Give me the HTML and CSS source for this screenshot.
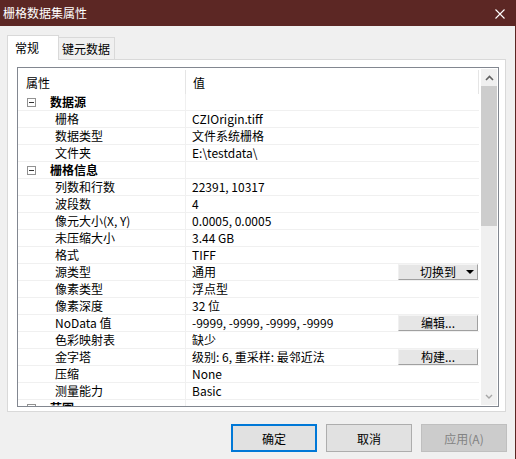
FILE: index.html
```html
<!DOCTYPE html>
<html lang="zh-CN">
<head>
<meta charset="utf-8">
<title>栅格数据集属性</title>
<link rel="stylesheet" href="styles.css">
</head>
<body>
<div class="window">
  <div class="titlebar">
    <span class="title">栅格数据集属性</span>
    <svg class="close" width="10" height="10" viewBox="0 0 10 10"><path d="M0.5 0.5L9.5 9.5M9.5 0.5L0.5 9.5" stroke="#fff" stroke-width="1.1" fill="none"/></svg>
  </div>
  <div class="content">
    <div class="tabs">
      <div class="tab active">常规</div>
      <div class="tab">键元数据</div>
    </div>
    <div class="panel">
      <div class="grid">
        <div class="table">
          <div class="hdr">
            <div class="c1">属性</div>
            <div class="c2">值</div>
          </div>
          <div class="row group"><div class="c1"><span class="toggle"></span><b>数据源</b></div><div class="c2"></div></div>
          <div class="row"><div class="c1">栅格</div><div class="c2">CZIOrigin.tiff</div></div>
          <div class="row"><div class="c1">数据类型</div><div class="c2">文件系统栅格</div></div>
          <div class="row"><div class="c1">文件夹</div><div class="c2">E:\testdata\</div></div>
          <div class="row group"><div class="c1"><span class="toggle"></span><b>栅格信息</b></div><div class="c2"></div></div>
          <div class="row"><div class="c1">列数和行数</div><div class="c2">22391, 10317</div></div>
          <div class="row"><div class="c1">波段数</div><div class="c2">4</div></div>
          <div class="row"><div class="c1">像元大小(X, Y)</div><div class="c2">0.0005, 0.0005</div></div>
          <div class="row"><div class="c1">未压缩大小</div><div class="c2">3.44 GB</div></div>
          <div class="row"><div class="c1">格式</div><div class="c2">TIFF</div></div>
          <div class="row"><div class="c1">源类型</div><div class="c2"><span>通用</span><span class="cellbtn drop"><span>切换到</span><i class="tri"></i></span></div></div>
          <div class="row"><div class="c1">像素类型</div><div class="c2">浮点型</div></div>
          <div class="row"><div class="c1">像素深度</div><div class="c2">32 位</div></div>
          <div class="row"><div class="c1">NoData 值</div><div class="c2"><span>-9999, -9999, -9999, -9999</span><span class="cellbtn">编辑...</span></div></div>
          <div class="row"><div class="c1">色彩映射表</div><div class="c2">缺少</div></div>
          <div class="row"><div class="c1">金字塔</div><div class="c2"><span>级别: 6, 重采样: 最邻近法</span><span class="cellbtn">构建...</span></div></div>
          <div class="row"><div class="c1">压缩</div><div class="c2">None</div></div>
          <div class="row"><div class="c1">测量能力</div><div class="c2">Basic</div></div>
          <div class="row group"><div class="c1"><span class="toggle"></span><b>范围</b></div><div class="c2"></div></div>
        </div>
        <div class="scroll">
          <div class="sbtn"><svg width="9" height="6" viewBox="0 0 9 6"><path d="M1 5L4.5 1.5L8 5" stroke="#606060" stroke-width="1.6" fill="none"/></svg></div>
          <div class="thumb"></div>
          <div class="track"></div>
          <div class="sbtn"><svg width="8" height="5" viewBox="0 0 8 5"><path d="M1 1L4 4L7 1" stroke="#a6a6a6" stroke-width="1.4" fill="none"/></svg></div>
        </div>
      </div>
    </div>
    <div class="buttons">
      <button class="btn default">确定</button>
      <button class="btn">取消</button>
      <button class="btn disabled">应用(A)</button>
    </div>
  </div>
</div>
</body>
</html>
```

FILE: styles.css
```css
* { box-sizing: border-box; }
html, body { margin: 0; padding: 0; }
body {
  width: 516px;
  height: 459px;
  overflow: hidden;
  background: #f0f0f0;
  font-family: "Noto Sans CJK SC", "Noto Sans", sans-serif;
  font-size: 12px;
  color: #000;
}
.window {
  width: 516px;
  height: 459px;
  border-right: 1px solid #5b2622;
  display: flex;
  flex-direction: column;
}
.titlebar {
  flex: none;
  height: 26px;
  background: #5c2724;
  color: #fff;
  display: flex;
  align-items: center;
  justify-content: space-between;
  padding: 0 10px 0 3px;
}
.title { font-size: 12px; line-height: 16px; }
.close { display: block; margin-top: 1px; }
.content {
  flex: 1;
  display: flex;
  flex-direction: column;
  padding: 9px 0 0 7px;
}
.tabs {
  display: flex;
  align-items: flex-end;
  height: 24px;
  position: relative;
  z-index: 1;
}
.tab {
  height: 22px;
  border: 1px solid #d9d9d9;
  border-bottom: none;
  border-left: none;
  background: #f0f0f0;
  padding: 0 3px;
  line-height: 22px;
  width: 56px;
}
.tab.active {
  height: 25px;
  width: 52px;
  margin-bottom: -1px;
  background: #fff;
  border-left: 1px solid #d9d9d9;
  padding: 0 0 0 7px;
  line-height: 24px;
}
.panel {
  width: 499px;
  height: 353px;
  background: #fff;
  border: 1px solid #d9d9d9;
  padding: 7px 6px 4px 9px;
}
.grid {
  width: 482px;
  height: 340px;
  border: 1px solid #828790;
  display: flex;
  background: #fff;
}
.table {
  width: 461px;
  height: 338px;
  overflow: hidden;
  flex: none;
}
.hdr {
  display: flex;
  height: 26px;
}
.hdr .c1, .hdr .c2 {
  margin-top: 2px;
  height: 24px;
  padding-top: 5px;
  line-height: 16px;
  border-right: 1px solid #e5e5e5;
}
.hdr .c1 { width: 168px; padding-left: 8px; }
.hdr .c2 { flex: 1; padding-left: 7px; }
.row {
  display: flex;
  height: 17px;
  border-bottom: 1px solid #f0f0f0;
  line-height: 16px;
}
.row .c1 {
  width: 168px;
  flex: none;
  padding-left: 37px;
  border-right: 1px solid #f0f0f0;
  white-space: nowrap;
}
.row .c2 {
  flex: 1;
  display: flex;
  padding-left: 6px;
  white-space: nowrap;
}
.row.group .c1 {
  padding-left: 9px;
  display: flex;
  align-items: center;
}
.row.group b { font-weight: 700; margin-left: 14px; }
.toggle {
  width: 9px;
  height: 9px;
  border: 1px solid #919191;
  position: relative;
  flex: none;
}
.toggle::after {
  content: "";
  position: absolute;
  left: 1px;
  top: 3px;
  width: 5px;
  height: 1px;
  background: #333;
}
.cellbtn {
  margin-left: auto;
  margin-right: 1px;
  width: 80px;
  height: 16px;
  background: #e6e6e6;
  border: 1px solid;
  border-color: #f4f4f4 #a0a0a0 #a0a0a0 #f0f0f0;
  text-align: center;
  line-height: 14px;
}
.cellbtn.drop {
  display: flex;
  align-items: center;
  padding-left: 21px;
  text-align: left;
}
.tri {
  margin-left: 10px;
  width: 0;
  height: 0;
  border-left: 4px solid transparent;
  border-right: 4px solid transparent;
  border-top: 4px solid #000;
}
.scroll {
  width: 16px;
  margin: 1px 0 1px 2px;
  display: flex;
  flex-direction: column;
  background: #f0f0f0;
}
.sbtn {
  height: 17px;
  display: flex;
  align-items: center;
  justify-content: center;
  flex: none;
}
.sbtn svg { display: block; }
.thumb {
  height: 140px;
  background: #cdcdcd;
  flex: none;
}
.track { flex: 1; }
.buttons {
  display: flex;
  justify-content: flex-end;
  gap: 9px;
  margin-top: 12px;
  padding-right: 8px;
}
.btn {
  width: 86px;
  height: 28px;
  font-family: "Noto Sans CJK SC", "Noto Sans", sans-serif;
  font-size: 12px;
  color: #000;
  background: #e1e1e1;
  border: 1px solid #adadad;
  padding: 0;
  margin: 0;
}
.btn.default { border: 2px solid #0078d7; }
.btn.disabled {
  background: #cccccc;
  border-color: #bfbfbf;
  color: #838383;
}
```
